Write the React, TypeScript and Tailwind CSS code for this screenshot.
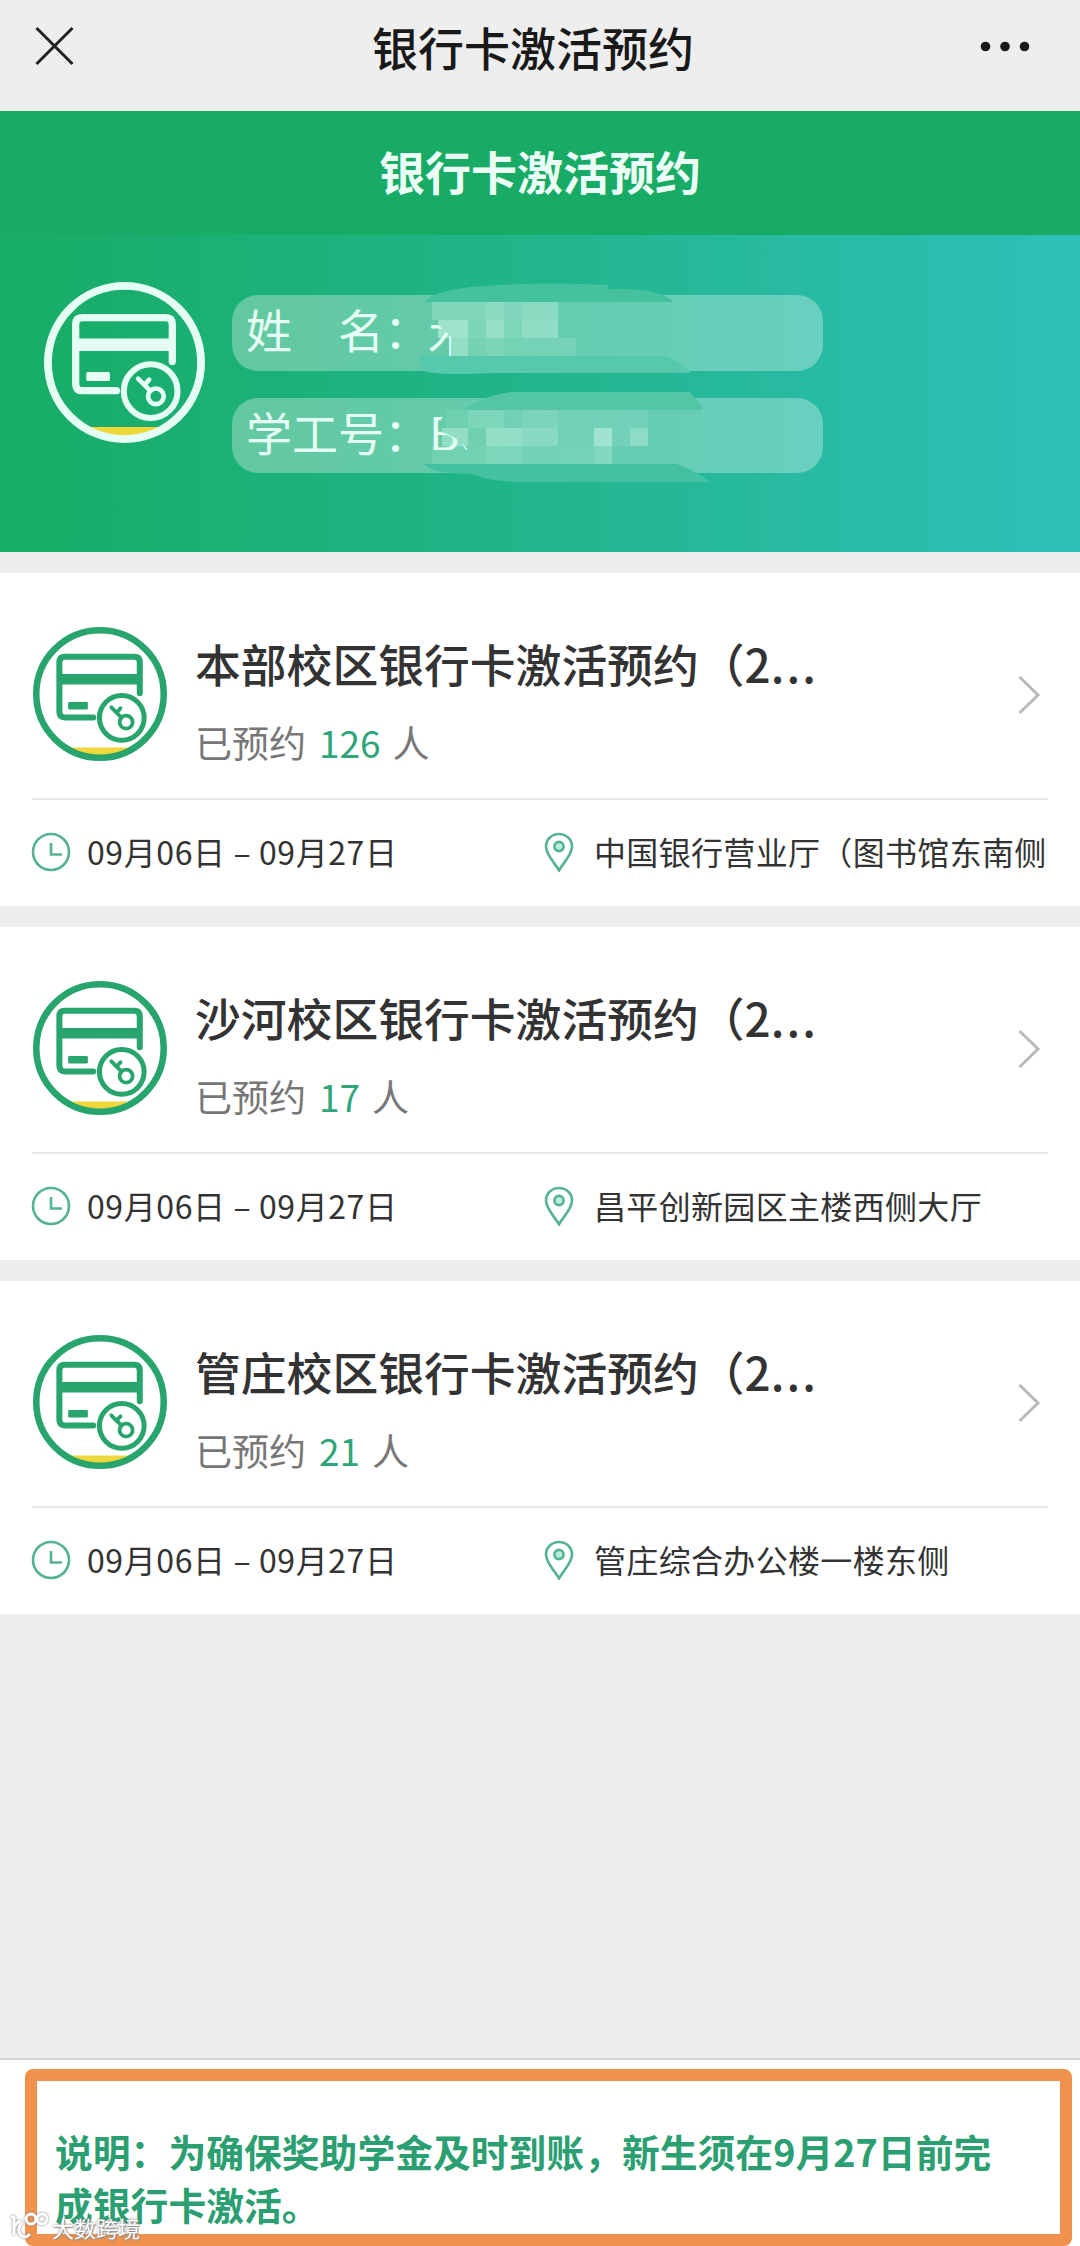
import React from "react";

const campuses = [
	{
		id: 1,
		title: "本部校区银行卡激活预约（2",
		count: 126,
		date: "09月06日 – 09月27日",
		place: "中国银行营业厅（图书馆东南侧",
	},
	{
		id: 2,
		title: "沙河校区银行卡激活预约（2",
		count: 17,
		date: "09月06日 – 09月27日",
		place: "昌平创新园区主楼西侧大厅",
	},
	{
		id: 3,
		title: "管庄校区银行卡激活预约（2",
		count: 21,
		date: "09月06日 – 09月27日",
		place: "管庄综合办公楼一楼东侧",
	},
];

// x, y, width, height, opacity of each mosaic tile
const nameTiles = [
	[200, 7, 126, 18, 0.22],
	[254, 7, 18, 18, 0.12],
	[290, 7, 36, 18, 0.1],
	[206, 25, 30, 18, 0.45],
	[236, 25, 90, 18, 0.2],
	[254, 25, 18, 18, 0.25],
	[290, 25, 36, 18, 0.18],
	[218, 43, 126, 18, 0.14],
	[218, 43, 18, 18, 0.28],
	[254, 43, 18, 18, 0.08],
];

const idTiles = [
	[214, 12, 202, 18, 0.1],
	[236, 12, 36, 18, 0.12],
	[290, 12, 36, 18, 0.1],
	[210, 30, 206, 18, 0.1],
	[210, 30, 26, 18, 0.3],
	[254, 30, 36, 18, 0.3],
	[290, 30, 36, 18, 0.2],
	[362, 30, 18, 18, 0.4],
	[398, 30, 18, 18, 0.22],
	[200, 48, 180, 18, 0.12],
	[254, 48, 36, 18, 0.1],
	[362, 48, 18, 18, 0.12],
];

const CardKeyIcon = ({ className, ring }: { className: string; ring: number }) => (
	<svg viewBox="0 0 160 160" className={className} fill="none" stroke="currentColor">
		<path d="M41 144H119Q102 158 80 158Q58 158 41 144Z" fill="#f0d83c" stroke="none" />
		<circle cx="80" cy="80" r={80 - ring / 2} strokeWidth={ring} />
		<path
			d="M72 108H38Q31.5 108 31.5 101V42Q31.5 35.5 38 35.5H121Q127.5 35.5 127.5 42V79"
			strokeWidth="7.2"
			strokeLinecap="round"
		/>
		<path d="M31 62.4H128" strokeWidth="12.5" />
		<rect x="42" y="89.5" width="23.5" height="9" rx="1.5" fill="currentColor" stroke="none" />
		<circle cx="106" cy="108.5" r="26.7" strokeWidth="6" />
		<circle cx="111.2" cy="113.6" r="7.8" strokeWidth="4.6" />
		<path d="M105.5 108L93.5 96M100 102L104.5 97" strokeWidth="4.6" strokeLinecap="round" />
	</svg>
);

const ClockIcon = () => (
	<svg viewBox="0 0 40 40" className="size-10 shrink-0" fill="none" stroke="#55b48f" strokeWidth="2.6">
		<circle cx="20" cy="20" r="18" />
		<path d="M20 11V22.5H31" />
	</svg>
);

const PinIcon = () => (
	<svg viewBox="0 0 30 40" className="h-10 w-[30px] shrink-0" fill="none" stroke="#55b48f" strokeWidth="2.6">
		<path d="M15 38.5C11 31 2 23 2 14.5C2 7 8 2 15 2S28 7 28 14.5C28 23 19 31 15 38.5Z" />
		<circle cx="15" cy="14.5" r="4.6" fill="#b9eedb" />
	</svg>
);

const App = () => {
	return (
		<div className="relative flex h-[2246px] w-[1080px] flex-col overflow-hidden bg-[#eeeeee] font-['Noto_Sans_CJK_SC',sans-serif]">
			<header className="flex h-[111px] shrink-0 items-start justify-between px-[34px] pt-3.5">
				<svg viewBox="0 0 40 40" className="mt-3 size-10" fill="none" stroke="#222" strokeWidth="3">
					<path d="M2.5 2L38.5 38M38.5 2L2.5 38" />
				</svg>
				<div className="pl-3 text-[46px] leading-[64px] font-medium text-[#191919]">银行卡激活预约</div>
				<svg viewBox="0 0 50 40" className="mr-4 mt-3 h-10 w-[50px]" fill="#191919">
					<circle cx="5.5" cy="20.5" r="4.8" />
					<circle cx="25" cy="20.5" r="4.8" />
					<circle cx="44.5" cy="20.5" r="4.8" />
				</svg>
			</header>

			<div className="flex h-[124px] shrink-0 items-center justify-center bg-[#17ab66] pb-1.5 text-[46px] leading-[64px] font-bold text-[#ecfff6]">
				银行卡激活预约
			</div>

			<section className="flex h-[317px] shrink-0 bg-linear-to-r from-[#18ad68] from-5% via-[#21b58c] via-50% to-[#2fc0b9] pl-11">
				<CardKeyIcon className="mt-[47px] size-[161px] text-[#e6fff4]" ring={7.8} />
				<div className="ml-[27px] mt-[60px] flex flex-col gap-[27px]">
					<div className="relative h-[76px] w-[591px] rounded-[26px] bg-white/31 pl-3.5 text-[46px] leading-[66px] text-[#e6fff4]">
						<span className="whitespace-pre">姓　名：</span>
						<span className="absolute left-[196px] top-1">木</span>
						<svg viewBox="0 0 591 100" className="absolute -top-3 left-0 h-[100px] w-[591px]">
							<defs>
								<linearGradient id="smudge" gradientUnits="userSpaceOnUse" x1="200" y1="0" x2="470" y2="0">
									<stop offset="0" stopColor="#62cba8" />
									<stop offset="1" stopColor="#68cdb7" />
								</linearGradient>
							</defs>
							<g transform="translate(0 12)">
								<path d="M193 6Q205 -5 240 -8Q310 -14 376 -10V-6Q420 -8 440 5V7H193Z" fill="#45c19d" />
								<path d="M188 61H434Q450 67 459 78H260Q200 81 190 75Z" fill="#56c8ab" />
								<path d="M200 7H440V61H219V42L212 35L200 25Z" fill="url(#smudge)" />
								{nameTiles.map(([x, y, w, h, o], i) => (
									<rect key={i} x={x} y={y} width={w} height={h} fill="#e6fff4" opacity={o} />
								))}
							</g>
						</svg>
					</div>
					<div className="relative h-[75px] w-[591px] rounded-[26px] bg-white/31 pl-3.5 text-[46px] leading-[66px] text-[#e6fff4]">
						<span>学工号：</span>
						<span className="absolute left-[197px] top-0">Bc</span>
						<svg viewBox="0 0 591 100" className="absolute -top-3 left-0 h-[100px] w-[591px]">
							<g transform="translate(0 12)">
								<path d="M230 12Q255 -4 280 -6H458L470 8V12Z" fill="#54c6a6" />
								<path d="M192 66H445Q468 75 478 84H285Q255 83 240 76Q200 76 192 66Z" fill="#43c1a1" />
								<path d="M209 21Q218 12 234 12H470V66H200V52H236Q225 38 209 34Z" fill="url(#smudge)" />
								{idTiles.map(([x, y, w, h, o], i) => (
									<rect key={i} x={x} y={y} width={w} height={h} fill="#e6fff4" opacity={o} />
								))}
							</g>
						</svg>
					</div>
				</div>
			</section>

			<main className="mt-[21px] flex flex-col gap-[21px]">
				{campuses.map((campus) => (
					<div key={campus.id} className="h-[333px] bg-white px-8">
						<div className="flex h-[227px] items-start border-b-2 border-[#e8e8e8]">
							<CardKeyIcon className="ml-px mt-[54px] size-[134px] text-[#27a56d]" ring={7.8} />
							<div className="ml-7 mt-[57px] grow">
								<div className="text-[45.8px] leading-[66px] font-medium text-[#333]">
									{campus.title}
									<span className="tracking-[2.2px]">...</span>
								</div>
								<div className="mt-4 text-[37px] leading-[60px] text-[#777]">
									已预约<span className="ml-[13px] mr-3 text-[#2fa57a]">{campus.count}</span>人
								</div>
							</div>
							<svg viewBox="0 0 24 40" className="mr-[7px] mt-[102px] h-10 w-6" fill="none" stroke="#b9b9b9" strokeWidth="3">
								<path d="M2.5 2L21 20L2.5 38" />
							</svg>
						</div>
						<div className="flex h-[103px] items-center text-[32px] text-[#333]">
							<div className="-ml-px flex w-[513px] items-center gap-4">
								<ClockIcon />
								<span className="pb-0.5 tracking-[0.6px]">{campus.date}</span>
							</div>
							<div className="flex items-center gap-5">
								<PinIcon />
								<span className="whitespace-nowrap pb-0.5 tracking-[0.33px]">{campus.place}</span>
							</div>
						</div>
					</div>
				))}
			</main>

			<footer className="mt-auto h-[188px] shrink-0 border-t-2 border-[#d5d5d5] bg-white pl-[25px] pr-2 pt-[9px]">
				<div className="h-[177px] rounded-lg border-12 border-[#f0924e] pl-[18px] pt-[43px] text-[37.8px] leading-[53px] font-bold text-[#2b9f72]">
					<p>说明：为确保奖助学金及时到账，新生须在9月27日前完</p>
					<p>成银行卡激活。</p>
				</div>
			</footer>

			<div className="absolute bottom-0.5 left-2.5 flex items-center gap-0.5 text-[22px] leading-[34px] text-white [text-shadow:0_0_3px_#777,1px_1px_1px_#999]">
				<svg viewBox="0 0 40 30" className="h-[30px] w-10 drop-shadow-[0_0_1px_#777]" fill="none" stroke="#fff" strokeWidth="3">
					<path d="M1 5H4V23M4 15L10 8M12 10Q7 17 10 22Q14 28 20 22" />
					<circle cx="21" cy="7" r="5" />
					<circle cx="32" cy="7" r="5" />
				</svg>
				大数跨境
			</div>
		</div>
	);
};

export default App;
